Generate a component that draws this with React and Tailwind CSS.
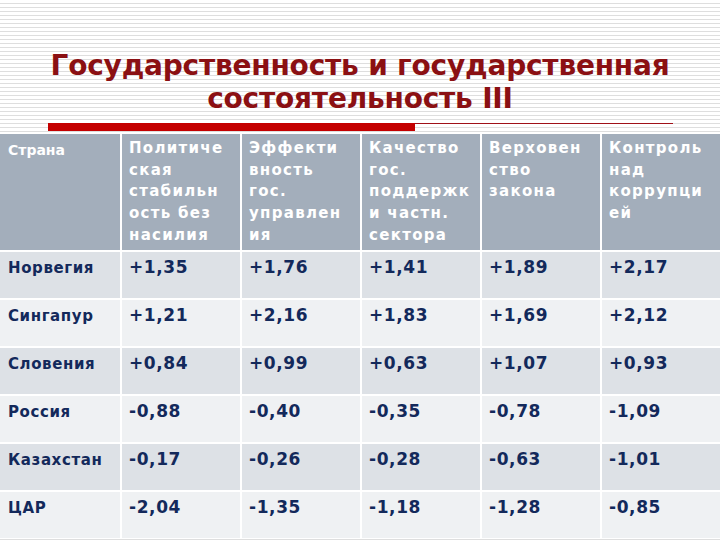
import React from "react";

const headers = [
  ["Страна"],
  ["Политиче", "ская", "стабильн", "ость без", "насилия"],
  ["Эффекти", "вность", "гос.", "управлен", "ия"],
  ["Качество", "гос.", "поддержк", "и частн.", "сектора"],
  ["Верховен", "ство", "закона"],
  ["Контроль", "над", "коррупци", "ей"],
];

const rows = [
  ["Норвегия", "+1,35", "+1,76", "+1,41", "+1,89", "+2,17"],
  ["Сингапур", "+1,21", "+2,16", "+1,83", "+1,69", "+2,12"],
  ["Словения", "+0,84", "+0,99", "+0,63", "+1,07", "+0,93"],
  ["Россия", "-0,88", "-0,40", "-0,35", "-0,78", "-1,09"],
  ["Казахстан", "-0,17", "-0,26", "-0,28", "-0,63", "-1,01"],
  ["ЦАР", "-2,04", "-1,35", "-1,18", "-1,28", "-0,85"],
];

const App = () => {
  return (
    <div className="w-[720px] h-[540px] overflow-hidden bg-[repeating-linear-gradient(to_bottom,#ffffff_0px,#ffffff_3px,#dedede_3px,#dedede_4px)] font-['DejaVu_Sans',sans-serif]">
      {/* title */}
      <div className="pt-[49px] text-center text-[#8b1013] font-bold text-[28px] leading-[33px] tracking-[-0.2px]">
        <div>Государственность и государственная</div>
        <div>состоятельность III</div>
      </div>

      {/* red rule */}
      <div className="mt-[8px] ml-[48px] flex items-start">
        <div className="w-[367px] h-[8px] bg-[#c40000]"></div>
        <div className="w-[258px] h-[1px] bg-[#a01018]"></div>
      </div>

      {/* table */}
      <div className="mt-[3px] grid grid-cols-[120px_118px_118px_118px_118px_1fr] gap-[2px] bg-white">
        {headers.map((lines, i) => (
          <div
            key={i}
            className={
              i === 0
                ? "h-[116px] bg-[#a3aebb] pl-[8px] pt-[6px] text-white font-bold text-[14px] leading-[20px]"
                : "h-[116px] bg-[#a3aebb] pl-[7px] pt-[4px] text-white font-bold text-[15px] leading-[21.7px] tracking-[1.3px]"
            }
          >
            {lines.map((l) => (
              <div key={l} className="whitespace-nowrap">
                {l}
              </div>
            ))}
          </div>
        ))}
        {rows.map((row, r) =>
          row.map((cell, c) => (
            <div
              key={r + "-" + c}
              className={
                (r % 2 === 0 ? "bg-[#dde1e6] " : "bg-[#eff1f3] ") +
                (c === 0
                  ? "h-[46px] pl-[8px] pt-[6px] text-[#13295b] font-bold text-[15px] leading-[20px] tracking-[0.6px] whitespace-nowrap"
                  : "h-[46px] pl-[7px] pt-[4px] text-[#13295b] font-bold text-[17px] leading-[22px] tracking-[0.6px]")
              }
            >
              {cell}
            </div>
          ))
        )}
      </div>
    </div>
  );
};

export default App;
